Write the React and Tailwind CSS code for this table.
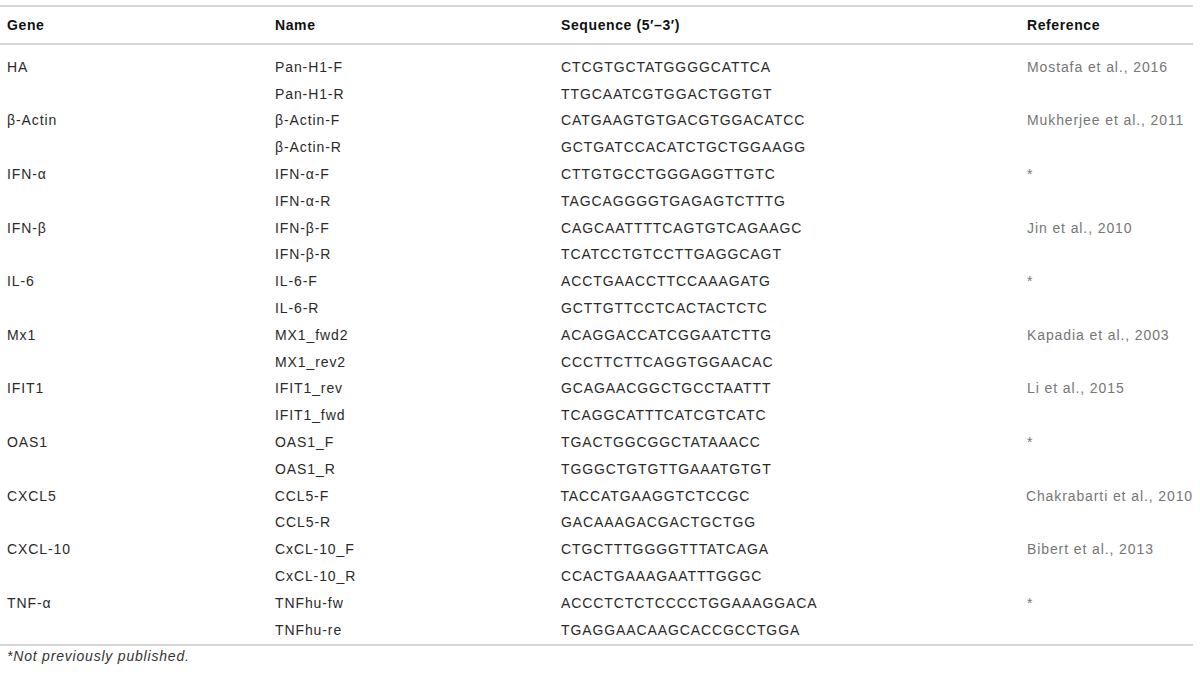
import React from "react";

const rows = [
  ["HA", "Pan-H1-F", "CTCGTGCTATGGGGCATTCA", "Mostafa et al., 2016"],
  ["", "Pan-H1-R", "TTGCAATCGTGGACTGGTGT", ""],
  ["β-Actin", "β-Actin-F", "CATGAAGTGTGACGTGGACATCC", "Mukherjee et al., 2011"],
  ["", "β-Actin-R", "GCTGATCCACATCTGCTGGAAGG", ""],
  ["IFN-α", "IFN-α-F", "CTTGTGCCTGGGAGGTTGTC", "*"],
  ["", "IFN-α-R", "TAGCAGGGGTGAGAGTCTTTG", ""],
  ["IFN-β", "IFN-β-F", "CAGCAATTTTCAGTGTCAGAAGC", "Jin et al., 2010"],
  ["", "IFN-β-R", "TCATCCTGTCCTTGAGGCAGT", ""],
  ["IL-6", "IL-6-F", "ACCTGAACCTTCCAAAGATG", "*"],
  ["", "IL-6-R", "GCTTGTTCCTCACTACTCTC", ""],
  ["Mx1", "MX1_fwd2", "ACAGGACCATCGGAATCTTG", "Kapadia et al., 2003"],
  ["", "MX1_rev2", "CCCTTCTTCAGGTGGAACAC", ""],
  ["IFIT1", "IFIT1_rev", "GCAGAACGGCTGCCTAATTT", "Li et al., 2015"],
  ["", "IFIT1_fwd", "TCAGGCATTTCATCGTCATC", ""],
  ["OAS1", "OAS1_F", "TGACTGGCGGCTATAAACC", "*"],
  ["", "OAS1_R", "TGGGCTGTGTTGAAATGTGT", ""],
  ["CXCL5", "CCL5-F", "TACCATGAAGGTCTCCGC", "Chakrabarti et al., 2010"],
  ["", "CCL5-R", "GACAAAGACGACTGCTGG", ""],
  ["CXCL-10", "CxCL-10_F", "CTGCTTTGGGGTTTATCAGA", "Bibert et al., 2013"],
  ["", "CxCL-10_R", "CCACTGAAAGAATTTGGGC", ""],
  ["TNF-α", "TNFhu-fw", "ACCCTCTCTCCCCTGGAAAGGACA", "*"],
  ["", "TNFhu-re", "TGAGGAACAAGCACCGCCTGGA", ""],
];

export default function App() {
  return (
    <div
      className="w-[1200px] h-[677px] bg-white overflow-hidden"
      style={{ fontFamily: '"Liberation Sans", Arial, sans-serif' }}
    >
      <div className="w-[1193px] mt-[5px] border-t-2 border-[#d6d6d6]">
        <div className="h-[38px] flex items-center text-[14px] tracking-[0.6px] font-bold text-[#111] border-b-2 border-[#d6d6d6]">
          <div className="w-[275px] pl-[7px]">Gene</div>
          <div className="w-[286px]">Name</div>
          <div className="w-[466px]">Sequence (5′–3′)</div>
          <div className="flex-1">Reference</div>
        </div>
        <div className="pt-[9px] border-b-2 border-[#d6d6d6]">
          {rows.map((r, i) => (
            <div
              key={i}
              className="h-[26.8px] flex items-center text-[14px] tracking-[0.9px] text-[#2a2a2a] whitespace-nowrap"
            >
              <div className="w-[275px] pl-[7px]">{r[0]}</div>
              <div className="w-[286px]">{r[1]}</div>
              <div className="w-[466px]">{r[2]}</div>
              <div className="flex-1 text-[#767676]">{r[3]}</div>
            </div>
          ))}
        </div>
      </div>
      <div className="pl-[7px] leading-[20px] text-[14px] tracking-[0.8px] italic text-[#333]">
        *Not previously published.
      </div>
    </div>
  );
}
